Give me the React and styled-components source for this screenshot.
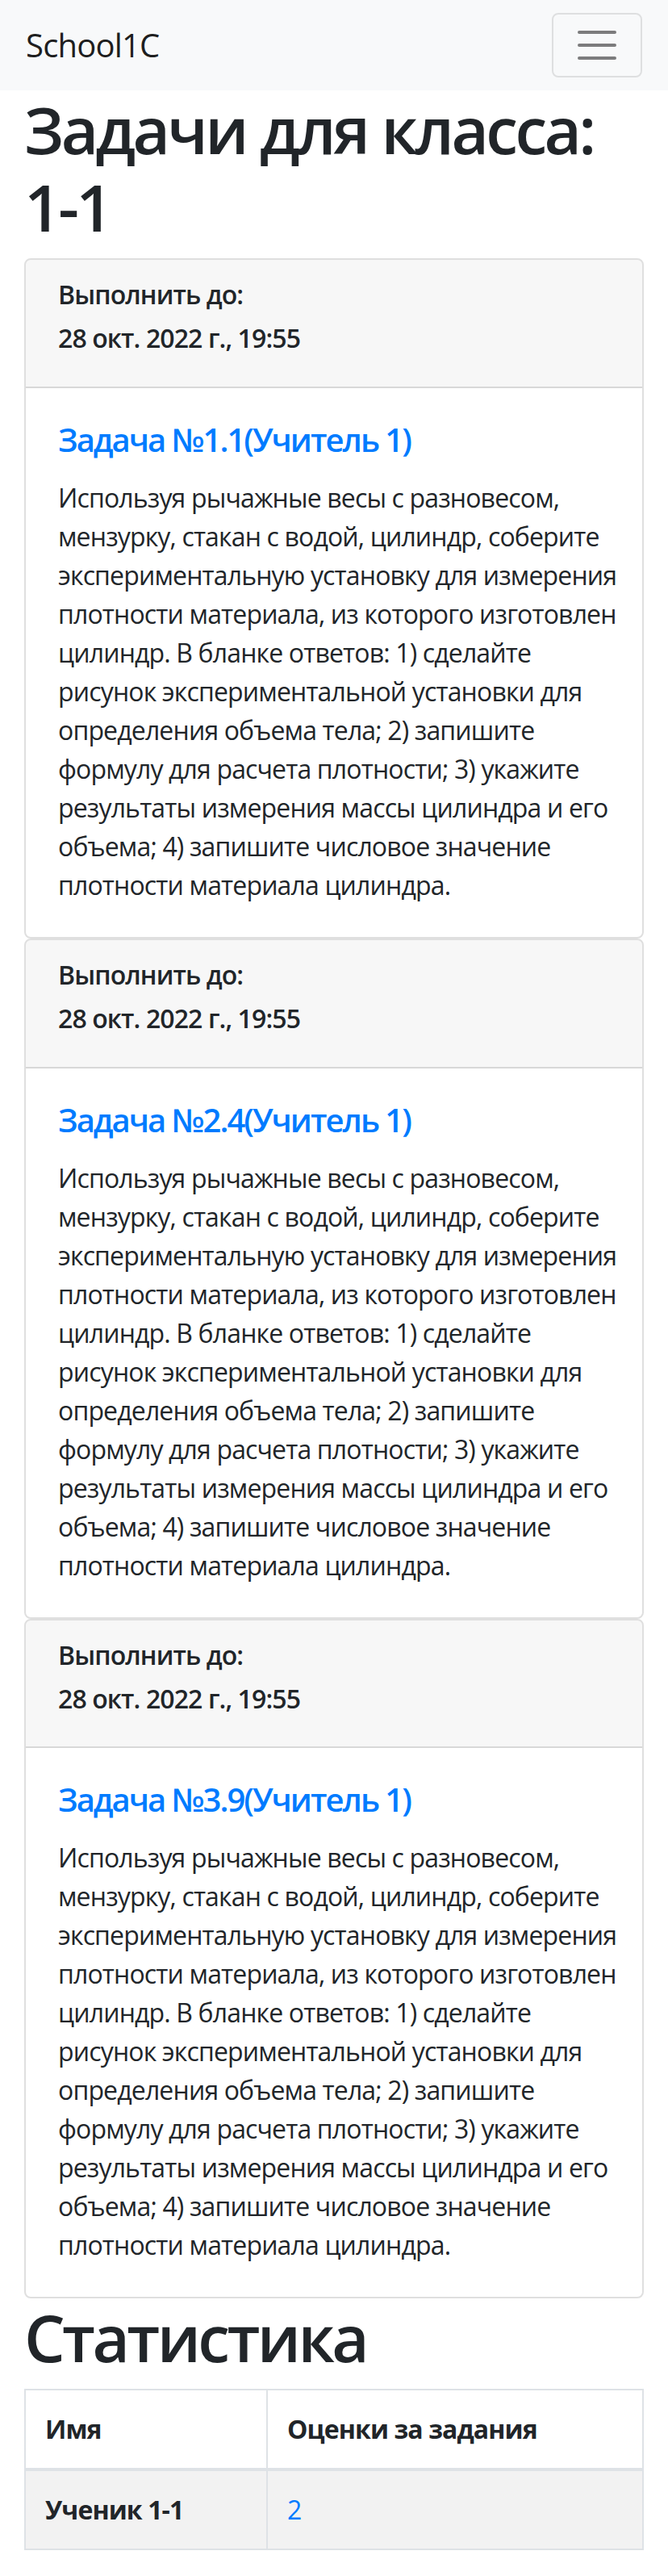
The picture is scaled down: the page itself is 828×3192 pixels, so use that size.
import React from "react";
import styled, { createGlobalStyle } from "styled-components";

const Global = createGlobalStyle`
  html, body { margin: 0; padding: 0; background: #fff; }
  body {
    font-family: "Open Sans", "Noto Sans", sans-serif;
    font-size: 32px;
    line-height: 1.5;
    color: #212529;
  }
  * { box-sizing: border-box; }
`;

const Navbar = styled.nav`
  display: flex;
  align-items: center;
  justify-content: space-between;
  background: #f8f9fa;
  padding: 16px 32px;
`;

const Brand = styled.a`
  font-size: 40px;
  line-height: 1.5;
  color: rgba(0, 0, 0, 0.9);
  text-decoration: none;
  letter-spacing: -0.8px;
`;

const Toggler = styled.button`
  display: flex;
  align-items: center;
  justify-content: center;
  width: 112px;
  height: 80px;
  padding: 8px 24px;
  background: transparent;
  border: 2px solid rgba(0, 0, 0, 0.1);
  border-radius: 8px;
`;

const Container = styled.main`
  padding: 0 30px;
`;

const H1 = styled.h1`
  margin: 0 0 16px;
  font-size: 80px;
  line-height: 1.2;
  font-weight: 600;
  letter-spacing: -3.6px;
`;

const Card = styled.section`
  border: 2px solid rgba(0, 0, 0, 0.125);
  border-radius: 8px;
  overflow: hidden;
`;

const CardHeader = styled.header`
  background: rgba(0, 0, 0, 0.03);
  padding: 24px 40px;
  border-bottom: 2px solid rgba(0, 0, 0, 0.125);
`;

const H6 = styled.h6`
  margin: 0 0 16px;
  font-size: 32px;
  line-height: 1.2;
  font-weight: 600;
  letter-spacing: -0.9px;
`;

const CardBody = styled.div`
  padding: 40px;
`;

const CardTitle = styled.a`
  display: block;
  margin: 0 0 24px;
  font-size: 40px;
  line-height: 1.2;
  font-weight: 600;
  color: #007bff;
  text-decoration: none;
  letter-spacing: -2px;
`;

const CardText = styled.p`
  margin: 0;
  letter-spacing: -0.85px;
`;

const Line = styled.span`
  display: block;
  white-space: nowrap;
`;

const Table = styled.table`
  width: 100%;
  border-collapse: collapse;
  margin-bottom: 32px;
  border: 2px solid #dee2e6;
`;

const Th = styled.th`
  padding: 24px;
  border: 2px solid #dee2e6;
  border-bottom-width: ${(p) => (p.$head ? "4px" : "2px")};
  text-align: left;
  font-weight: 700;
  line-height: 48px;
  letter-spacing: -0.9px;
  width: ${(p) => p.$w || "auto"};
`;

const Td = styled.td`
  padding: 24px;
  border: 2px solid #dee2e6;
  line-height: 48px;
`;

const Row = styled.tr`
  background: ${(p) => (p.$striped ? "rgba(0,0,0,0.05)" : "transparent")};
`;

const GradeLink = styled.a`
  color: #007bff;
  text-decoration: none;
`;

const HamburgerIcon = () => (
  <svg width="60" height="60" viewBox="0 0 30 30" aria-hidden="true">
    <path
      stroke="rgba(0,0,0,0.5)"
      strokeLinecap="round"
      strokeMiterlimit="10"
      strokeWidth="2"
      d="M4 7h22M4 15h22M4 23h22"
    />
  </svg>
);

const lines = [
  "Используя рычажные весы с разновесом,",
  "мензурку, стакан с водой, цилиндр, соберите",
  "экспериментальную установку для измерения",
  "плотности материала, из которого изготовлен",
  "цилиндр. В бланке ответов: 1) сделайте",
  "рисунок экспериментальной установки для",
  "определения объема тела; 2) запишите",
  "формулу для расчета плотности; 3) укажите",
  "результаты измерения массы цилиндра и его",
  "объема; 4) запишите числовое значение",
  "плотности материала цилиндра.",
];

const tasks = ["Задача №1.1(Учитель 1)", "Задача №2.4(Учитель 1)", "Задача №3.9(Учитель 1)"];

export default function App() {
  return (
    <>
      <Global />
      <Navbar>
        <Brand href="#">School1C</Brand>
        <Toggler aria-label="Toggle navigation">
          <HamburgerIcon />
        </Toggler>
      </Navbar>
      <Container>
        <H1>
          Задачи для класса:
          <br />
          1-1
        </H1>
        {tasks.map((t) => (
          <Card key={t}>
            <CardHeader>
              <H6>Выполнить до:</H6>
              <H6>28 окт. 2022 г., 19:55</H6>
            </CardHeader>
            <CardBody>
              <CardTitle href="#">{t}</CardTitle>
              <CardText>
                {lines.map((l) => (
                  <Line key={l}>{l}</Line>
                ))}
              </CardText>
            </CardBody>
          </Card>
        ))}
        <H1>Статистика</H1>
        <Table>
          <thead>
            <tr>
              <Th $head $w="300px">Имя</Th>
              <Th $head>Оценки за задания</Th>
            </tr>
          </thead>
          <tbody>
            <Row $striped>
              <Th>Ученик 1-1</Th>
              <Td>
                <GradeLink href="#">2</GradeLink>
              </Td>
            </Row>
          </tbody>
        </Table>
      </Container>
    </>
  );
}
